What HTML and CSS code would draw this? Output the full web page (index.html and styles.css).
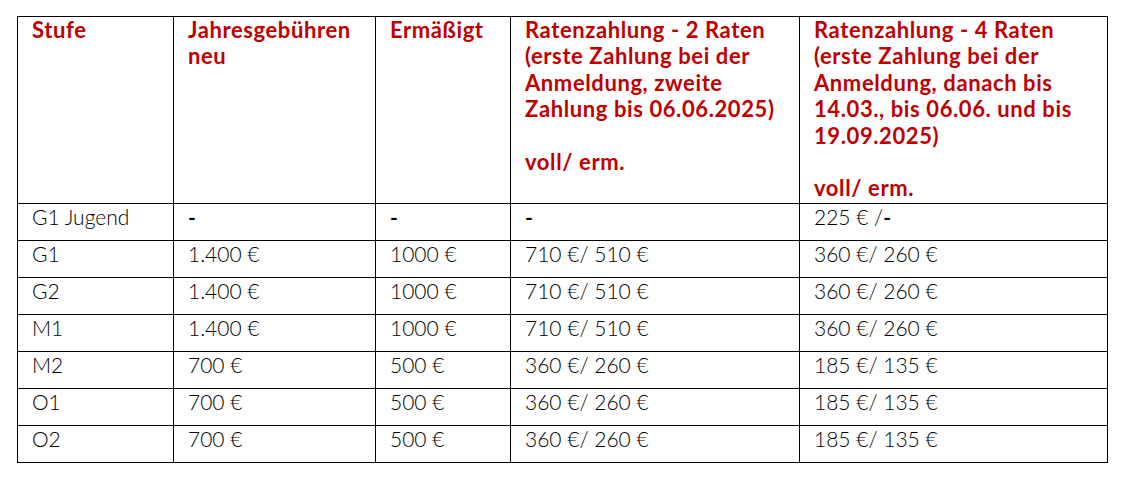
FILE: index.html
```html
<!DOCTYPE html>
<html lang="de">
<head>
<meta charset="utf-8">
<title>Gebühren</title>
<link rel="stylesheet" href="styles.css">
</head>
<body>
<div class="page">
<table class="fees">
  <colgroup>
    <col class="c1"><col class="c2"><col class="c3"><col class="c4"><col class="c5">
  </colgroup>
  <thead>
    <tr class="head">
      <th>Stufe</th>
      <th>Jahresgebühren<br>neu</th>
      <th>Ermäßigt</th>
      <th>Ratenzahlung - 2 Raten<br>(erste Zahlung bei der<br>Anmeldung, zweite<br>Zahlung bis 06.06.2025)<br><br>voll/ erm.</th>
      <th>Ratenzahlung - 4 Raten<br>(erste Zahlung bei der<br>Anmeldung, danach bis<br>14.03., bis 06.06. und bis<br>19.09.2025)<br><br>voll/ erm.</th>
    </tr>
  </thead>
  <tbody>
    <tr><td>G1 Jugend</td><td><b>-</b></td><td><b>-</b></td><td><b>-</b></td><td>225 € /<b>-</b></td></tr>
    <tr><td>G1</td><td>1.400 €</td><td>1000 €</td><td>710 €/ 510 €</td><td>360 €/ 260 €</td></tr>
    <tr><td>G2</td><td>1.400 €</td><td>1000 €</td><td>710 €/ 510 €</td><td>360 €/ 260 €</td></tr>
    <tr><td>M1</td><td>1.400 €</td><td>1000 €</td><td>710 €/ 510 €</td><td>360 €/ 260 €</td></tr>
    <tr><td>M2</td><td>700 €</td><td>500 €</td><td>360 €/ 260 €</td><td>185 €/ 135 €</td></tr>
    <tr><td>O1</td><td>700 €</td><td>500 €</td><td>360 €/ 260 €</td><td>185 €/ 135 €</td></tr>
    <tr><td>O2</td><td>700 €</td><td>500 €</td><td>360 €/ 260 €</td><td>185 €/ 135 €</td></tr>
  </tbody>
</table>
</div>
</body>
</html>
```
FILE: styles.css
```css
html, body {
  margin: 0;
  padding: 0;
  background: #ffffff;
}
.page {
  padding: 16px 0 0 17px;
}
.fees {
  border-collapse: collapse;
  table-layout: fixed;
  width: 1090px;
  font-family: Lato, "Liberation Sans", sans-serif;
  font-size: 21px;
  line-height: 26.4px;
  color: #000000;
}
.c1 { width: 156px; }
.c2 { width: 202px; }
.c3 { width: 135px; }
.c4 { width: 289px; }
.c5 { width: 308px; }
.fees th,
.fees td {
  border: 1px solid #000000;
  text-align: left;
  vertical-align: top;
  padding: 0 0 0 14px;
  white-space: nowrap;
}
.fees th {
  color: #c00000;
  font-weight: 700;
  font-size: 22px;
  letter-spacing: 0.6px;
  padding-top: 0;
}
.head {
  height: 187px;
}
.fees td {
  font-weight: 300;
  padding-top: 0;
}
.fees tbody tr {
  height: 37px;
}
.fees td b {
  font-weight: 700;
}
```
